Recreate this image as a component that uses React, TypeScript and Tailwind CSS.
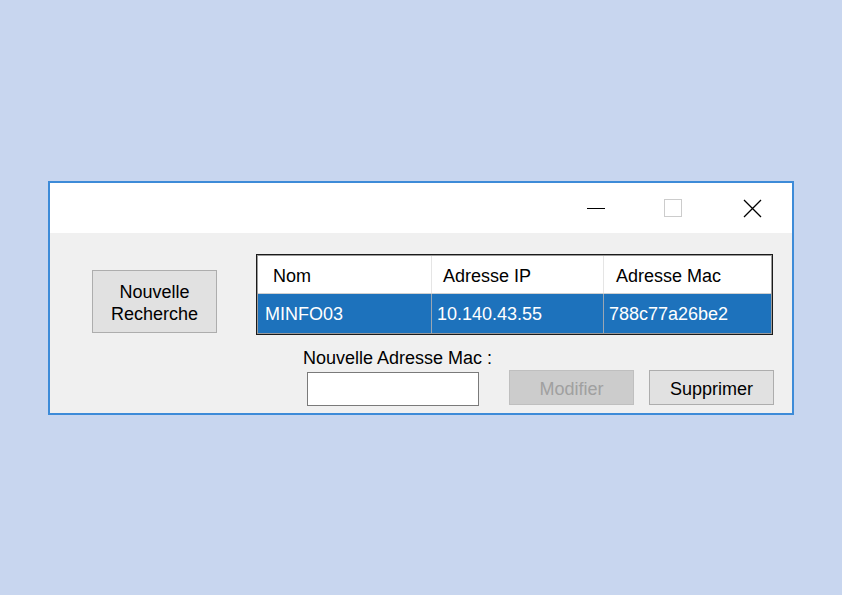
const font = { fontFamily: '"Liberation Sans", Arial, sans-serif' };

const COLONNES = [
  { titre: "Nom", valeur: "MINFO03", w: "w-[174px]", hp: "pl-[15px]", vp: "pl-[7px]" },
  { titre: "Adresse IP", valeur: "10.140.43.55", w: "w-[172px]", hp: "pl-[11px]", vp: "pl-[5px]" },
  { titre: "Adresse Mac", valeur: "788c77a26be2", w: "flex-1", hp: "pl-[12px]", vp: "pl-[5px]" },
];

function TitleBar() {
  return (
    <div className="h-[50px] bg-white flex items-center justify-end">
      <div className="w-[18px] h-[1px] bg-black mr-[59px]" />
      <div className="w-[18px] h-[18px] border border-[#cccccc] mr-[61px]" />
      <svg width="19" height="19" viewBox="0 0 19 19" className="mr-[30px]">
        <path d="M1 1 L18 18 M18 1 L1 18" stroke="#000" strokeWidth="1.3" />
      </svg>
    </div>
  );
}

function Tableau() {
  return (
    <div className="w-[517px] h-[81px] border border-[#1a1a1a]">
      <div className="h-full border border-[#9a9a9a] flex flex-col">
        <div className="h-[38px] bg-white flex border-b border-[#d0d0d0]">
          {COLONNES.map((c, i) => (
            <div
              key={c.titre}
              className={`${c.w} ${c.hp} pt-[4px] flex items-center ${i < 2 ? "border-r border-[#e5e5e5]" : ""}`}
            >
              {c.titre}
            </div>
          ))}
        </div>
        <div className="flex-1 bg-[#1d72bc] flex text-white">
          {COLONNES.map((c, i) => (
            <div
              key={c.valeur}
              className={`${c.w} ${c.vp} pt-[2px] flex items-center ${i < 2 ? "border-r border-[#9aa6b3]" : ""}`}
            >
              {c.valeur}
            </div>
          ))}
        </div>
      </div>
    </div>
  );
}

export default function App() {
  return (
    <div className="w-[842px] h-[595px] bg-[#c8d6ef] pt-[181px] pl-[48px] text-[18px] text-black" style={font}>
      <div className="w-[746px] h-[234px] border-2 border-[#3d8bd8] bg-[#f0f0f0] flex flex-col">
        <TitleBar />
        <div className="flex pl-[42px] pt-[21px]">
          <button className="mt-[16px] w-[125px] h-[63px] pt-[2px] bg-[#e1e1e1] border border-[#adadad] leading-[22px]">
            Nouvelle
            <br />
            Recherche
          </button>
          <div className="ml-[39px] flex flex-col">
            <Tableau />
            <div className="flex items-start mt-[12px]">
              <div className="ml-[47px] w-[200px] flex flex-col">
                <span className="leading-[22px]">Nouvelle Adresse Mac :</span>
                <input
                  type="text"
                  className="mt-[3px] ml-[4px] w-[172px] h-[34px] bg-white border border-[#7a7a7a] outline-none"
                />
              </div>
              <button
                disabled
                className="mt-[23px] ml-[6px] w-[125px] h-[35px] pt-[3px] bg-[#cccccc] border border-[#bfbfbf] text-[#a0a0a0]"
              >
                Modifier
              </button>
              <button className="mt-[23px] ml-[15px] w-[125px] h-[35px] pt-[3px] bg-[#e1e1e1] border border-[#adadad]">
                Supprimer
              </button>
            </div>
          </div>
        </div>
      </div>
    </div>
  );
}
